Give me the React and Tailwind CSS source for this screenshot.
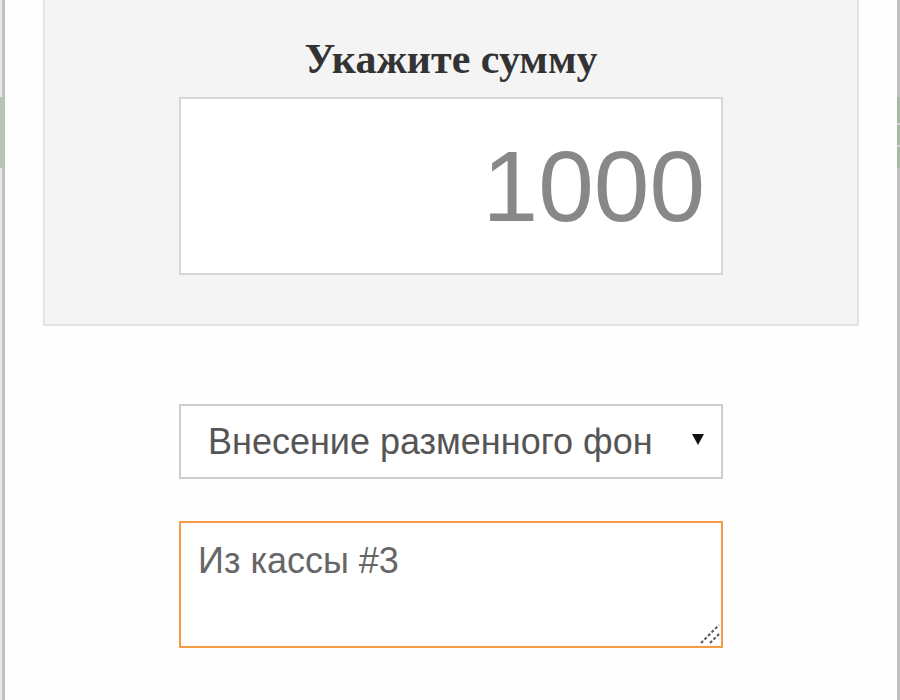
import { useState } from "react";

function EdgeLeft() {
  return (
    <div className="flex w-[5px] shrink-0 flex-col">
      <div className="h-[97px] border-r-[3px] border-[#c2c2c2] bg-[#e9e9e9]" />
      <div className="h-[71px] bg-[#b6c6b2]" />
      <div className="flex-1 border-r-[3px] border-[#c2c2c2] bg-[#e9e9e9]" />
    </div>
  );
}

function EdgeRight() {
  return (
    <div className="flex w-[3px] shrink-0 flex-col">
      <div className="h-[97px] bg-[#c0c0c0]" />
      <div className="h-[26px] bg-[#a9b8a6]" />
      <div className="h-[2px] bg-[#d4d4d4]" />
      <div className="h-[20px] bg-[#a9b8a6]" />
      <div className="h-[2px] bg-[#d4d4d4]" />
      <div className="h-[21px] bg-[#a9b8a6]" />
      <div className="flex-1 bg-[#c0c0c0]" />
    </div>
  );
}

export default function App() {
  const [amount, setAmount] = useState("1000");
  const [type, setType] = useState("change");
  const [comment, setComment] = useState("Из кассы #3");

  return (
    <div className="flex min-h-[700px] bg-[#fefefe] font-['Liberation_Sans',Arial,sans-serif]">
      <EdgeLeft />

      <main className="flex flex-1 flex-col items-center px-[38px]">
        {/* amount block */}
        <section className="flex w-full flex-col items-center border-2 border-t-0 border-[#e3e3e3] bg-[#f4f4f4] pb-[49px]">
          <h2 className="pt-[35px] pb-[14px] font-['Liberation_Serif','Times_New_Roman',serif] text-[42px] font-bold leading-[48px] text-[#333]">
            Укажите сумму
          </h2>
          <input
            value={amount}
            onChange={(e) => setAmount(e.target.value)}
            className="h-[178px] w-[544px] border-2 border-[#d6d6d6] bg-white pr-4 text-right text-[100px] text-[#888] outline-none"
          />
        </section>

        <div className="relative mt-[78px] w-[544px]">
          <select
            value={type}
            onChange={(e) => setType(e.target.value)}
            className="h-[75px] w-full appearance-none border-2 border-[#cdcdcd] bg-white pl-[27px] pr-[70px] text-[36px] text-[#555] outline-none"
          >
            <option value="change">Внесение разменного фонда</option>
            <option value="cash">Инкассация</option>
          </select>
          <svg
            className="pointer-events-none absolute right-[19px] top-[30px]"
            width="12"
            height="11"
            viewBox="0 0 12 11"
          >
            <polygon points="0,0 12,0 6,11" fill="#111" />
          </svg>
        </div>

        <div className="relative mt-[42px] w-[544px]">
          <textarea
            value={comment}
            onChange={(e) => setComment(e.target.value)}
            className="block h-[127px] w-full resize-none border-2 border-[#f59b43] bg-white px-[17px] pt-[11px] text-[36px] text-[#666] outline-none"
          />
          {/* resize grip */}
          <svg
            className="pointer-events-none absolute bottom-[4px] right-[3px]"
            width="20"
            height="20"
            viewBox="0 0 20 20"
          >
            <line x1="1" y1="19" x2="19" y2="1" stroke="#555" strokeWidth="2" strokeDasharray="3 2" />
            <line x1="10" y1="19" x2="19" y2="10" stroke="#555" strokeWidth="2" strokeDasharray="3 2" />
          </svg>
        </div>
      </main>

      <EdgeRight />
    </div>
  );
}
